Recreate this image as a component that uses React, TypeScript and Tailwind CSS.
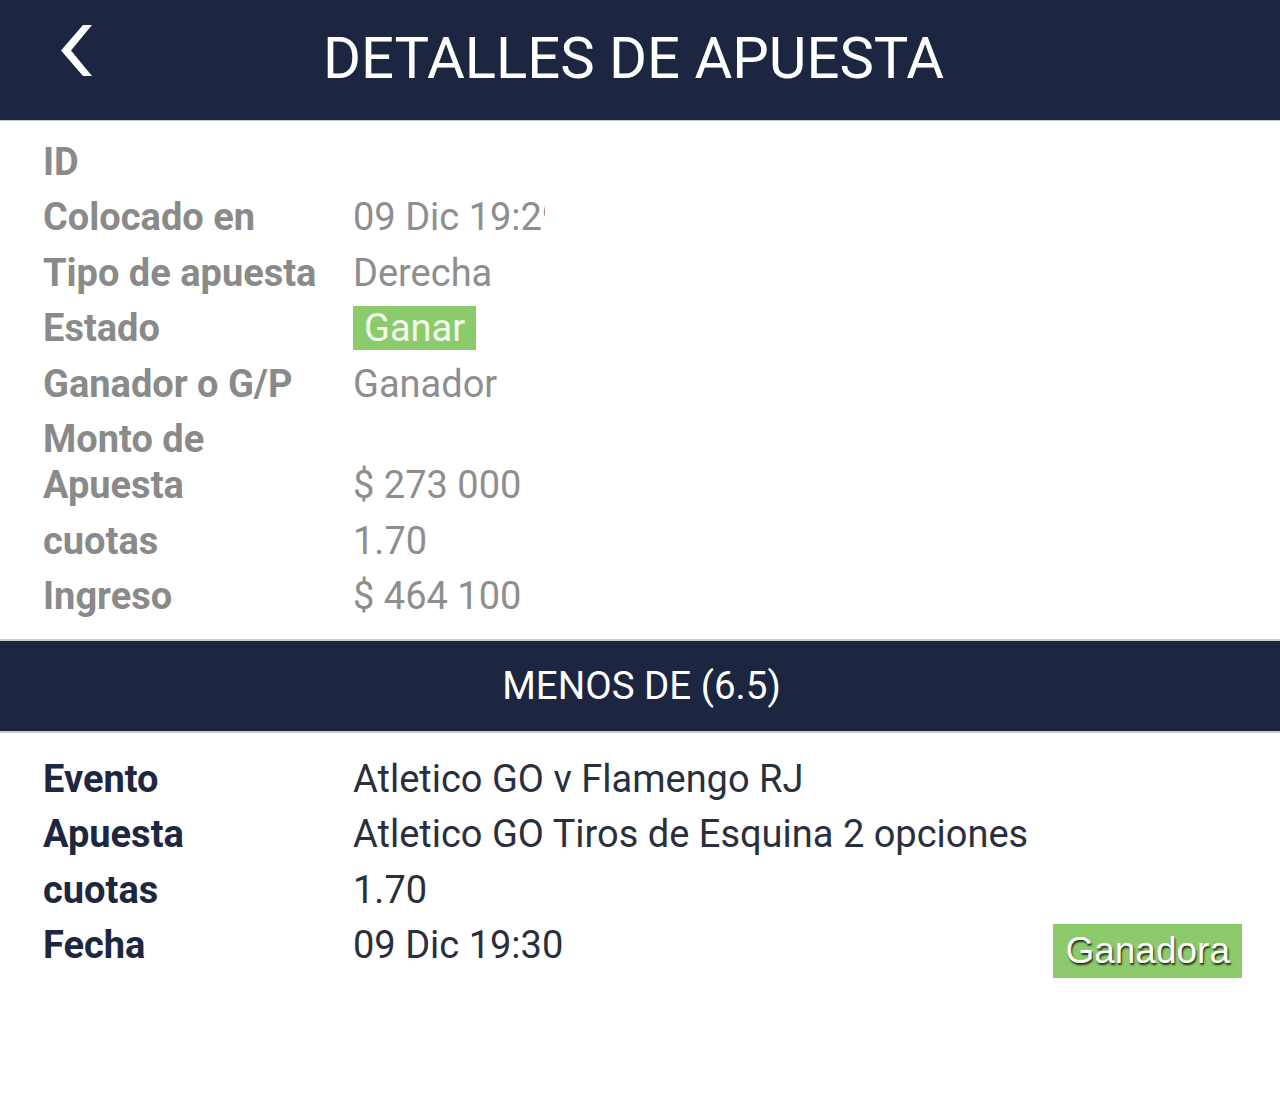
import type { ReactNode } from "react";

const FONT = { fontFamily: "Roboto, 'Noto Sans', sans-serif" };

function Row({
  label,
  children,
  dark = false,
  align = "items-end",
}: {
  label: ReactNode;
  children?: ReactNode;
  dark?: boolean;
  align?: string;
}): JSX.Element {
  return (
    <div className={`flex ${align} py-[4.75px] leading-[46px] text-[38px]`}>
      <div
        className={`w-[310px] shrink-0 font-bold ${dark ? "text-[#1d2740]" : "text-[#8a8a8a]"}`}
      >
        {label}
      </div>
      <div className={`flex-1 flex items-center ${dark ? "text-[#2a2f3d]" : "text-[#8e8e8e]"}`}>
        {children}
      </div>
    </div>
  );
}

export default function BetDetails(): JSX.Element {
  return (
    <div className="min-h-screen bg-white" style={FONT}>
      {/* Header */}
      <header className="relative h-[121px] bg-[#1c2641] border-b border-[#c7cbd3] flex items-center justify-center">
        <svg
          className="absolute left-[57px] top-[24px]"
          width="36"
          height="53"
          viewBox="0 0 36 53"
        >
          <polygon points="35,1 26,1 4,26.5 26,52 35,52 14,26.5" fill="#ffffff" />
        </svg>
        <h1 className="text-white text-[58px] font-normal -ml-[13px] -mt-[4px]">
          DETALLES DE APUESTA
        </h1>
      </header>

      {/* Bet summary */}
      <section className="px-[43px] pt-[13px] pb-[15px]">
        <Row label="ID" />
        <Row label="Colocado en">
          {/* the value column clips the time, as in the app */}
          <span className="block w-[192px] overflow-hidden whitespace-nowrap">09 Dic 19:29</span>
        </Row>
        <Row label="Tipo de apuesta">Derecha</Row>
        <Row label="Estado" align="items-center">
          <span className="bg-[#8ccb6c] text-[#f3faee] px-[11px] leading-[44px]">Ganar</span>
        </Row>
        <Row label="Ganador o G/P">Ganador</Row>
        <Row label={<>Monto de<br />Apuesta</>}>$ 273 000</Row>
        <Row label="cuotas">1.70</Row>
        <Row label="Ingreso">$ 464 100</Row>
      </section>

      {/* Selection bar */}
      <div className="h-[94px] bg-[#1c2641] border-y-2 border-[#c9ccd2] flex items-center justify-center">
        <span className="text-white text-[38.5px] ml-[3px]">MENOS DE (6.5)</span>
      </div>

      {/* Selection details */}
      <section className="pl-[43px] pr-[38px] pt-[18px]">
        <Row label="Evento" dark>Atletico GO v Flamengo RJ</Row>
        <Row label="Apuesta" dark>Atletico GO Tiros de Esquina 2 opciones</Row>
        <Row label="cuotas" dark>1.70</Row>
        <Row label="Fecha" dark>
          <span className="flex-1">09 Dic 19:30</span>
          <span
            className="relative top-[6px] -my-[4px] bg-[#8dca6b] text-white text-[37px] leading-[54px] px-[12px]"
            style={{
              fontFamily: "'Liberation Sans', Arial, sans-serif",
              textShadow: "1px 2px 2px rgba(30,40,20,1)",
            }}
          >
            Ganadora
          </span>
        </Row>
      </section>
    </div>
  );
}
